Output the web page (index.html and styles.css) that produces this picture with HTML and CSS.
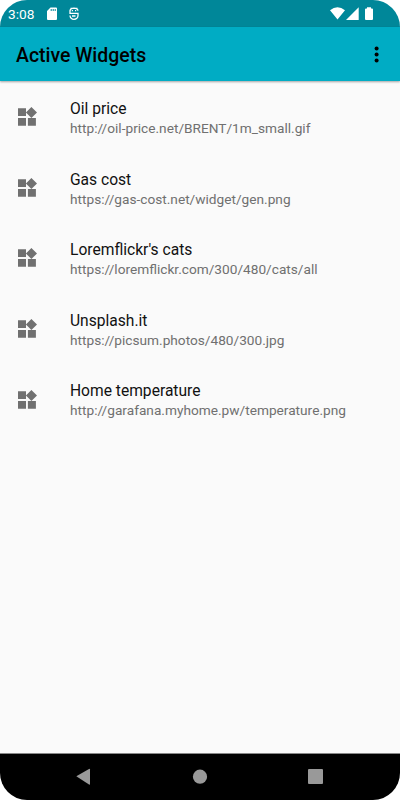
FILE: index.html
```html
<!DOCTYPE html>
<html lang="en">
<head>
<meta charset="utf-8">
<title>Active Widgets</title>
<link rel="stylesheet" href="styles.css">
</head>
<body>
<div class="screen">
  <div class="status">
    <span class="time">3:08</span>
    <svg class="sd" width="10" height="13" viewBox="0 0 10 13"><path fill="#fff" fill-rule="evenodd" d="M3.5.5H9q1 0 1 1V12q0 1-1 1H1q-1 0-1-1V4zM3.7 2v2h1V2zM5.7 2v2h1V2zM7.7 2v2h1V2z"/></svg>
    <svg class="debug" width="10" height="13" viewBox="0 0 10 13"><path fill="none" stroke="#fff" stroke-width="1.3" d="M9 3.6C8.5.4 1.5.4 1 3.6V6.3H9V8.6a4 3.7 0 0 1-8 0M1.5 1.3H8.5M3 9h3.5"/><path fill="#fff" d="M2.8 3h1.2v1.2H2.8zM6 3h1.2v1.2H6z"/></svg>
    <svg class="signals" width="44" height="14" viewBox="0 0 44 14" fill="#fff"><path d="M0 3.3Q7.5-2.8 15 3.3L7.5 12.6zM16 13 28.7.3V13zM37 .3h4v1.2h1q1 0 1 1V12q0 1-1 1h-6q-1 0-1-1V2.5q0-1 1-1h1z"/></svg>
  </div>
  <header class="toolbar">
    <h1>Active Widgets</h1>
    <svg width="6" height="18" viewBox="0 0 6 18"><circle cx="2.6" cy="2.6" r="2"/><circle cx="2.6" cy="8.6" r="2"/><circle cx="2.6" cy="14.6" r="2"/></svg>
  </header>
  <main class="list">
    <div class="row"><svg class="icon" viewBox="0 0 19 19"><use href="#w"/></svg><div class="text"><div class="name">Oil price</div><div class="url">http://oil-price.net/BRENT/1m_small.gif</div></div></div>
    <div class="row"><svg class="icon" viewBox="0 0 19 19"><use href="#w"/></svg><div class="text"><div class="name">Gas cost</div><div class="url">https://gas-cost.net/widget/gen.png</div></div></div>
    <div class="row"><svg class="icon" viewBox="0 0 19 19"><use href="#w"/></svg><div class="text"><div class="name">Loremflickr's cats</div><div class="url">https://loremflickr.com/300/480/cats/all</div></div></div>
    <div class="row"><svg class="icon" viewBox="0 0 19 19"><use href="#w"/></svg><div class="text"><div class="name">Unsplash.it</div><div class="url">https://picsum.photos/480/300.jpg</div></div></div>
    <div class="row"><svg class="icon" viewBox="0 0 19 19"><defs><path id="w" d="M0 1.2h8v7.9H0zM0 11h8v7.8H0zM9.9 11h8v7.8h-8zM13.4 0 19 5.5 13.4 11 7.9 5.5z"/></defs><use href="#w"/></svg><div class="text"><div class="name">Home temperature</div><div class="url">http://garafana.myhome.pw/temperature.png</div></div></div>
  </main>
  <nav class="nav">
    <svg width="400" height="46" viewBox="0 0 400 46" fill="#999"><path d="M76.3 22.3 89 15q1-.5 1 .5v14.5q0 1-1 .5z"/><circle cx="200" cy="22.7" r="7.1"/><rect x="308" y="15" width="15" height="15" rx="1"/></svg>
  </nav>
</div>
</body>
</html>
```
FILE: styles.css
```css
body {
  margin: 0;
  background: #fff;
  font-family: Roboto, sans-serif;
}
.screen {
  width: 400px;
  height: 800px;
  display: flex;
  flex-direction: column;
  overflow: hidden;
  border-radius: 27px;
  background: #fafafa;
}
.status {
  height: 27px;
  flex: none;
  display: flex;
  align-items: center;
  box-sizing: border-box;
  padding: 0 26px 0 8px;
  background: #008799;
  color: #fff;
}
.time {
  width: 39px;
  font-size: 13.7px;
  line-height: 17px;
  padding-top: 1px;
}
.debug {
  margin-left: 11.5px;
}
.signals {
  margin-left: auto;
}
.toolbar {
  height: 54px;
  flex: none;
  display: flex;
  align-items: center;
  justify-content: space-between;
  box-sizing: border-box;
  padding: 1px 20px 0 16px;
  background: #00acc4;
  box-shadow: 0 1px 2px rgba(0, 0, 0, 0.35);
}
.toolbar h1 {
  margin: 0;
  padding-top: 2px;
  font-size: 19.45px;
  font-weight: 500;
  line-height: 24px;
}
.list {
  flex: 1;
}
.row {
  height: 70.6px;
  display: flex;
  align-items: center;
}
.icon {
  width: 19px;
  height: 19px;
  margin: 1px 33px 0 18px;
  fill: #707070;
}
.text {
  padding-top: 4.5px;
}
.name {
  font-size: 15.6px;
  line-height: 20px;
  color: #111;
}
.url {
  font-size: 13.68px;
  line-height: 19px;
  color: #707070;
}
.nav {
  height: 47px;
  flex: none;
  box-sizing: border-box;
  border-top: 1px solid #888;
  background: #000;
}
.nav svg {
  display: block;
}
```
